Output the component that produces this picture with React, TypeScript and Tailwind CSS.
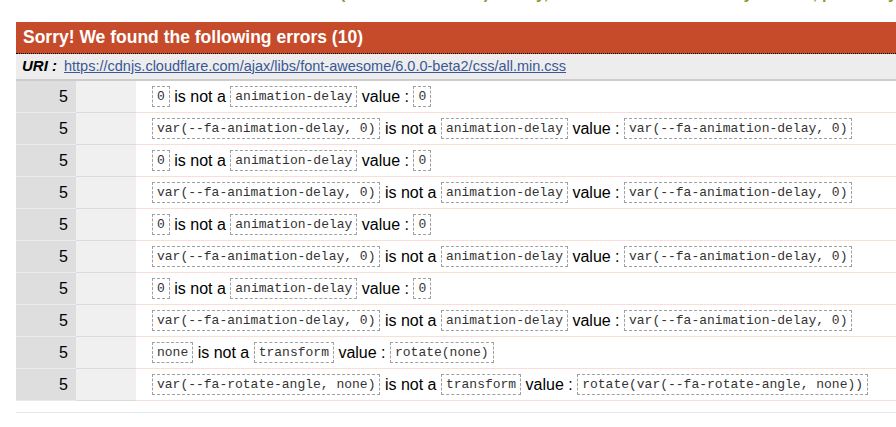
import React from 'react';

type Part = { code?: string; text?: string };

interface ErrorRow {
  line: number;
  parts: Part[];
}

const delay = 'var(--fa-animation-delay, 0)';

const rows: ErrorRow[] = [
  { line: 5, parts: [{ code: '0' }, { text: 'is not a' }, { code: 'animation-delay' }, { text: 'value :' }, { code: '0' }] },
  { line: 5, parts: [{ code: delay }, { text: 'is not a' }, { code: 'animation-delay' }, { text: 'value :' }, { code: delay }] },
  { line: 5, parts: [{ code: '0' }, { text: 'is not a' }, { code: 'animation-delay' }, { text: 'value :' }, { code: '0' }] },
  { line: 5, parts: [{ code: delay }, { text: 'is not a' }, { code: 'animation-delay' }, { text: 'value :' }, { code: delay }] },
  { line: 5, parts: [{ code: '0' }, { text: 'is not a' }, { code: 'animation-delay' }, { text: 'value :' }, { code: '0' }] },
  { line: 5, parts: [{ code: delay }, { text: 'is not a' }, { code: 'animation-delay' }, { text: 'value :' }, { code: delay }] },
  { line: 5, parts: [{ code: '0' }, { text: 'is not a' }, { code: 'animation-delay' }, { text: 'value :' }, { code: '0' }] },
  { line: 5, parts: [{ code: delay }, { text: 'is not a' }, { code: 'animation-delay' }, { text: 'value :' }, { code: delay }] },
  { line: 5, parts: [{ code: 'none' }, { text: 'is not a' }, { code: 'transform' }, { text: 'value :' }, { code: 'rotate(none)' }] },
  {
    line: 5,
    parts: [
      { code: 'var(--fa-rotate-angle, none)' },
      { text: 'is not a' },
      { code: 'transform' },
      { text: 'value :' },
      { code: 'rotate(var(--fa-rotate-angle, none))' },
    ],
  },
];

function Code({ children }: { children: string }) {
  return (
    <span className="inline-block align-middle border border-dashed border-[#a0a0a0] px-[4px] py-[2px] font-['Liberation_Mono',monospace] text-[13px] leading-[15px] text-[#333] whitespace-pre">
      {children}
    </span>
  );
}

export default function App() {
  return (
    <div className="w-[896px] h-[427px] overflow-hidden bg-white font-['Liberation_Sans',Arial,sans-serif] text-black">
      {/* page heading, scrolled mostly out of view */}
      <div className="h-[22px] overflow-hidden">
        <div className="mt-[-14px] pl-[340px] text-[16px] leading-[16px] font-bold text-[#78a22f] whitespace-nowrap">
          (CSS level 3 + SVG) : Sorry, we found errors in this style sheet; please try again (application/css)
        </div>
      </div>

      <div className="ml-4">
        <h2 className="h-[32px] bg-[#c64b2b] border-b border-dotted border-black pl-[7px] flex items-center text-[17.5px] font-bold text-white">
          Sorry! We found the following errors (10)
        </h2>

        <div className="h-[27px] bg-[#ededed] border-b-2 border-[#cccccc] pl-[6px] flex items-center text-[14.5px]">
          <span className="font-bold italic text-[15px] mr-[7px]">URI :</span>
          <a href="#" className="text-[#3a5896] underline">
            https://cdnjs.cloudflare.com/ajax/libs/font-awesome/6.0.0-beta2/css/all.min.css
          </a>
        </div>

        <div className="flex flex-col">
          {rows.map((r, i) => (
            <div key={i} className="flex h-[32px]">
              <div className="w-[60px] bg-[#dedede] border-b border-[#ebebeb] flex items-center justify-end pr-[8px] text-[16px]">
                {r.line}
              </div>
              <div className="w-[60px] bg-[#f0f0f0] border-b border-[#dcdcdc]" />
              <div className="flex-1 border-b border-[#f9ddd6] flex items-center pl-4">
                <p className="text-[16px] leading-[20px] whitespace-nowrap">
                  {r.parts.map((p, j) => (
                    <React.Fragment key={j}>
                      {j > 0 && ' '}
                      {p.code !== undefined ? <Code>{p.code}</Code> : <span className="align-middle">{p.text}</span>}
                    </React.Fragment>
                  ))}
                </p>
              </div>
            </div>
          ))}
        </div>

        <div className="mt-[11px] border-t border-[#e8e8f0]" />
      </div>
    </div>
  );
}
